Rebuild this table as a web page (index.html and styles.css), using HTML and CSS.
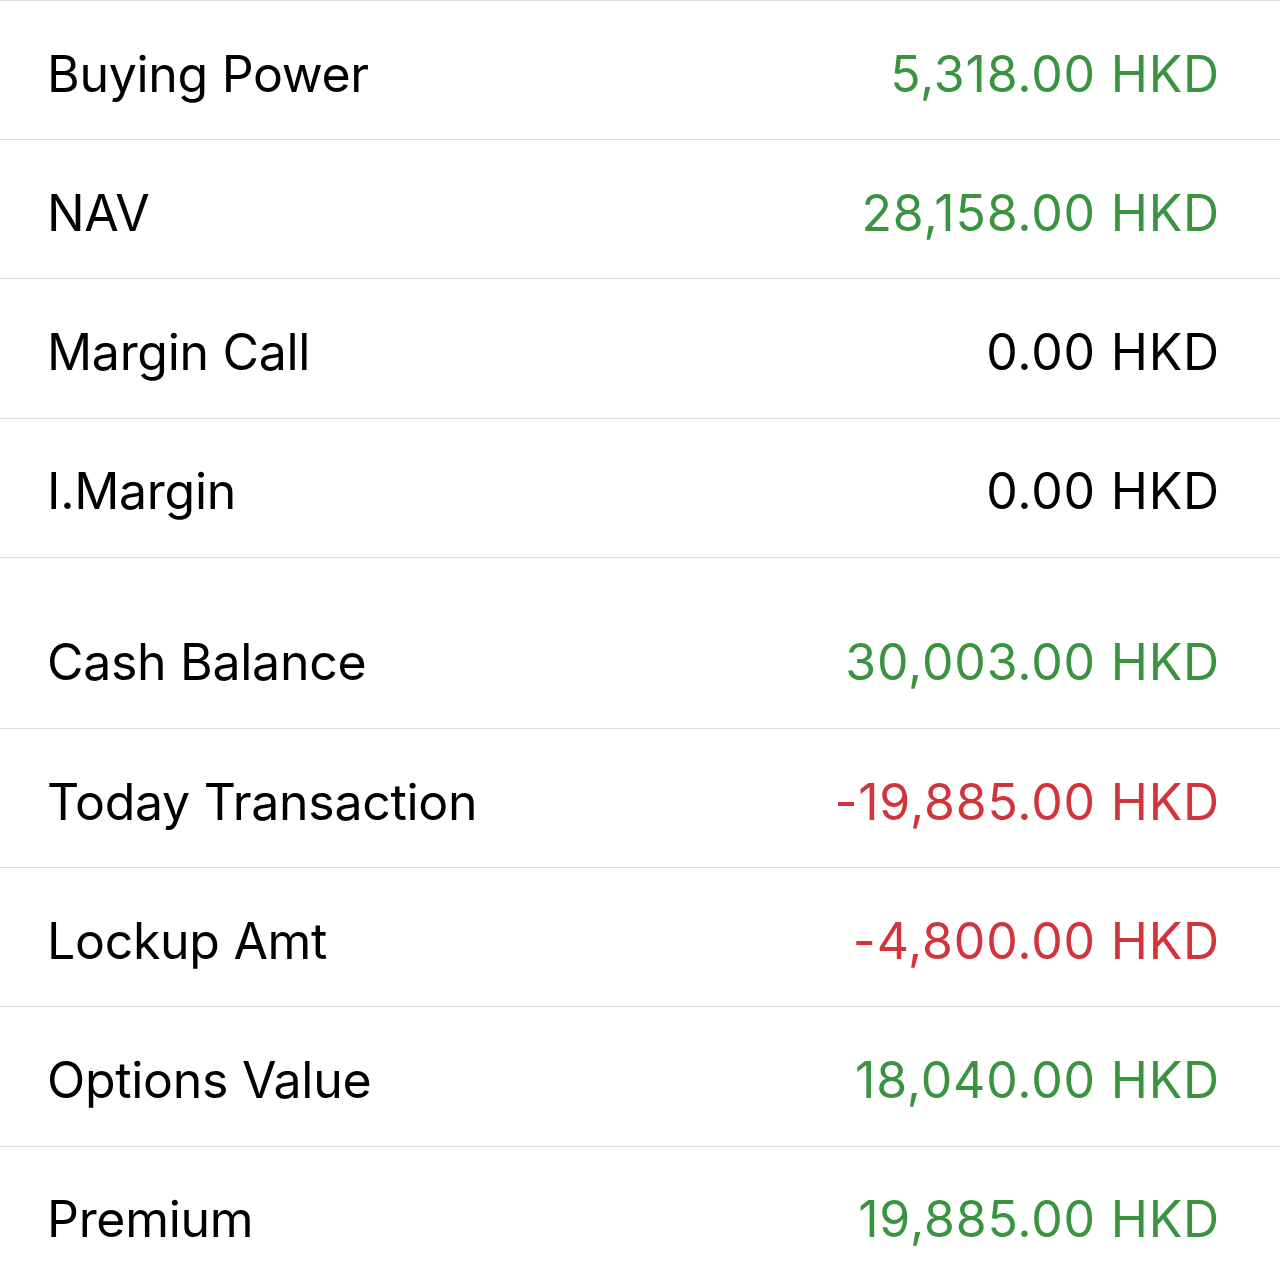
FILE: index.html
```html
<!DOCTYPE html>
<html>
<head>
<meta charset="utf-8">
<link rel="stylesheet" href="styles.css">
</head>
<body>
<div class="group first">
  <div class="row"><span class="label">Buying Power</span><span class="value pos">5,318.00 HKD</span></div>
  <div class="row"><span class="label">NAV</span><span class="value pos">28,158.00 HKD</span></div>
  <div class="row"><span class="label">Margin Call</span><span class="value">0.00 HKD</span></div>
  <div class="row"><span class="label">I.Margin</span><span class="value">0.00 HKD</span></div>
</div>
<div class="group second">
  <div class="row"><span class="label">Cash Balance</span><span class="value pos">30,003.00 HKD</span></div>
  <div class="row"><span class="label">Today Transaction</span><span class="value neg">-19,885.00 HKD</span></div>
  <div class="row"><span class="label">Lockup Amt</span><span class="value neg">-4,800.00 HKD</span></div>
  <div class="row"><span class="label">Options Value</span><span class="value pos">18,040.00 HKD</span></div>
  <div class="row"><span class="label">Premium</span><span class="value pos">19,885.00 HKD</span></div>
</div>
</body>
</html>
```
FILE: styles.css
```css
html, body {
  margin: 0;
  padding: 0;
  background: #ffffff;
}
body {
  font-family: Inter, "Noto Sans", "DejaVu Sans", sans-serif;
  color: #000000;
}
.group.first {
  border-top: 1px solid #dcdcdc;
}
.group.second {
  margin-top: 32px;
}
.row {
  border-bottom: 1px solid #dcdcdc;
  display: flex;
  align-items: center;
  justify-content: space-between;
  padding: 7px 60px 0 47px;
  box-sizing: content-box;
  height: 131.2px;
  font-size: 50px;
  letter-spacing: -0.3px;
}
.value {
  letter-spacing: 0.8px;
}
.value.pos { color: #3a933f; }
.value.neg { color: #d1343a; }
```
